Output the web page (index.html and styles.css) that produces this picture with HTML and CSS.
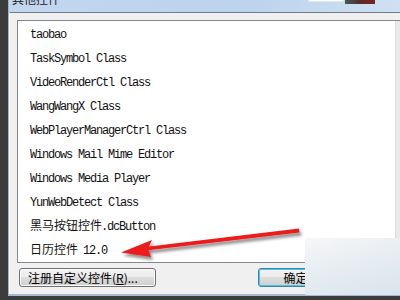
FILE: index.html
```html
<!DOCTYPE html>
<html lang="zh-CN">
<head>
  <meta charset="UTF-8" />
  <title>其他控件</title>
  <link rel="stylesheet" href="styles.css">
</head>
<body>

  <div class="window">
    <div class="titlebar">
      <span class="title">其他控件</span>
      <div class="caption">
        <span class="cap-min"></span>
        <span class="cap-close"></span>
      </div>
    </div>

    <div class="client">
      <div class="listbox">
        <ul class="items">
          <li>taobao</li>
          <li>TaskSymbol Class</li>
          <li>VideoRenderCtl Class</li>
          <li>WangWangX Class</li>
          <li>WebPlayerManagerCtrl Class</li>
          <li>Windows Mail Mime Editor</li>
          <li>Windows Media Player</li>
          <li>YunWebDetect Class</li>
          <li><span class="cjk">黑马按钮控件</span>.dcButton</li>
          <li><span class="cjk">日历控件</span> 12.0</li>
        </ul>
        <div class="scrollbar"></div>
      </div>

      <div class="actions">
        <button class="btn btn-register">注册自定义控件(<u>R</u>)...</button>
        <button class="btn btn-ok">确定</button>
      </div>
    </div>
  </div>

  <!-- light patch over the lower right corner -->
  <div class="glare"></div>

  <!-- red pointer drawn on top of the screenshot -->
  <svg class="arrow" width="400" height="300" viewBox="0 0 400 300">
    <defs>
      <filter id="shade" x="-20%" y="-50%" width="140%" height="200%">
        <feDropShadow dx="2" dy="3" stdDeviation="1.6" flood-color="#000" flood-opacity="0.45"/>
      </filter>
    </defs>
    <g filter="url(#shade)" fill="#ec1c1c">
      <path d="M145 247 L299 228.5 L299.5 232.5 L146 250.5 Z"/>
      <path d="M121 252.5 L152 240 L148 248.5 L151 257 Z"/>
    </g>
  </svg>

</body>
</html>
```

FILE: styles.css
```css
* { box-sizing: border-box; }

body {
  margin: 0;
  width: 400px;
  height: 300px;
  overflow: hidden;
  position: relative;
  background: #3c3c3c;
  font-family: "Liberation Mono", "Noto Sans CJK SC", monospace;
}

.window {
  margin-left: 8px;
  width: 392px;
  height: 296px;
  display: flex;
  flex-direction: column;
  overflow: hidden;
  background: #c9daee;
  border-left: 1px solid #9fb2c8;
  border-bottom: 2px solid #a7b9cf;
}

/* title bar, mostly scrolled off the top */
.titlebar {
  height: 12px;
  flex-shrink: 0;
  display: flex;
  justify-content: space-between;
  background: linear-gradient(90deg, #c2d7ee, #bcd3ec 60%, #cfe0f2);
  overflow: hidden;
}

.title {
  margin: -9px 0 0 3px;
  font-family: "Noto Sans CJK SC", sans-serif;
  font-size: 12px;
  line-height: 16px;
  color: #1a1a1a;
}

.caption {
  display: flex;
  align-items: flex-start;
  margin-right: 25px;
}

.cap-min {
  width: 36px;
  height: 2px;
  background: #fbfcfd;
  border: 1px solid #dfe6ee;
  border-top: none;
}

.cap-close {
  width: 30px;
  height: 4px;
  margin-left: 1px;
  background: linear-gradient(90deg, #3f5a5e, #5a2a2a 50%, #7a2222);
}

/* dialog body */
.client {
  flex: 1;
  display: flex;
  flex-direction: column;
  padding: 7px 0 0 7px;
  background: #f0f0f0;
  border-top: 1px solid #6f7c8c;
  border-left: 1px solid #fbfbfb;
}

.listbox {
  height: 243px;
  display: flex;
  background: #fff;
  border: 1px solid #828790;
  border-right: none;
}

.items {
  flex: 1;
  margin: 0;
  padding: 2px 0 0 12px;
  list-style: none;
}

.items li {
  height: 24px;
  line-height: 24px;
  font-size: 12px;
  letter-spacing: -1.2px;
  color: #111;
  white-space: nowrap;
}

.cjk {
  letter-spacing: 0;
  margin-right: -1px;
}

.scrollbar {
  width: 5px;
  background: #e9e9e9;
  border-left: 1px solid #dcdcdc;
}

.actions {
  display: flex;
  gap: 102px;
  margin: 5px 0 0 2px;
}

.btn {
  height: 19px;
  padding: 0;
  font-family: "Noto Sans CJK SC", sans-serif;
  font-size: 12px;
  line-height: 17px;
  color: #000;
  border: 1px solid #707070;
  border-radius: 3px;
  background: linear-gradient(#f2f2f2, #ebebeb 50%, #dddddd 50%, #cfcfcf);
  box-shadow: inset 0 0 0 1px #fcfcfc;
}

.btn u {
  text-underline-offset: 1px;
}

.btn-register {
  width: 137px;
  text-align: left;
  padding-left: 8px;
}

.btn-ok {
  width: 75px;
  border-color: #3c7fb1;
  box-shadow: inset 0 0 0 1px #48c8e8;
}

.glare {
  position: absolute;
  left: 305px;
  top: 238px;
  width: 95px;
  height: 57px;
  background: linear-gradient(165deg, #f6f7f8, #e6ecf1 50%, #d9e4ee);
}

.arrow {
  position: absolute;
  left: 0;
  top: 0;
  pointer-events: none;
}
```
